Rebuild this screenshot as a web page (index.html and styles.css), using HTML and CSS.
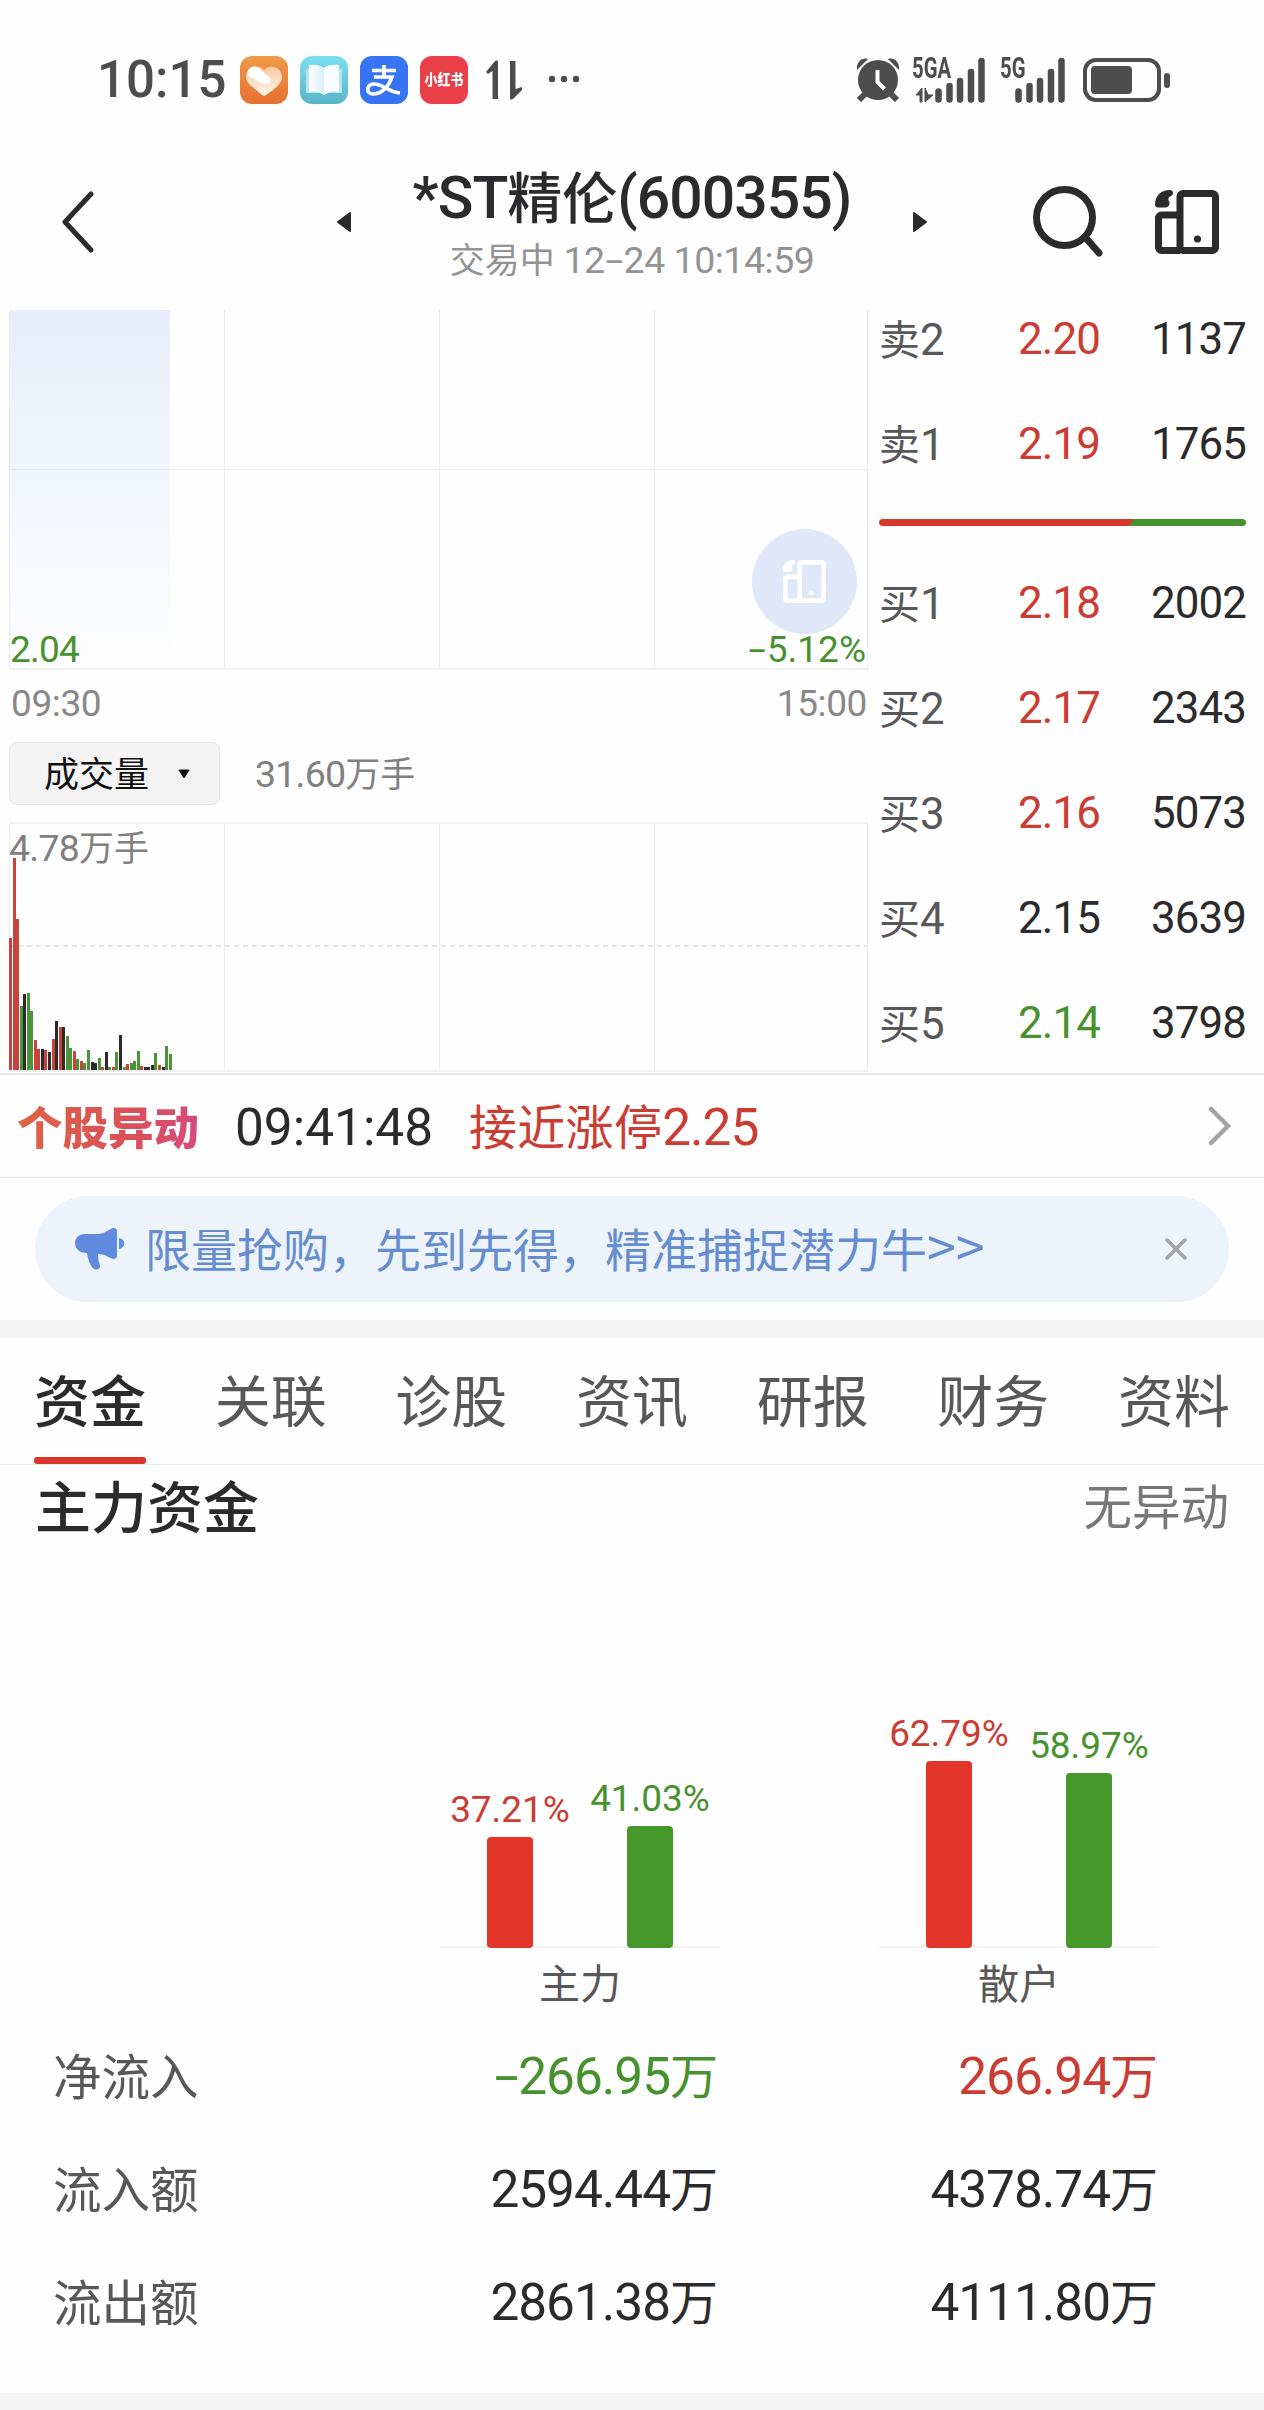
FILE: index.html
```
<!DOCTYPE html>
<html lang="zh-CN">
<head>
    <meta charset="UTF-8">
    <meta name="viewport" content="width=device-width, initial-scale=1.0">
    <title>*ST精伦(600355)</title>
    <link rel="stylesheet" href="styles.css">
</head>
<body>
    <svg class="defs" width="0" height="0">
        <symbol id="cards" viewBox="0 0 64 64">
            <rect x="25" y="3.500" width="35.500" height="57" rx="3" fill="none" stroke="currentColor" stroke-width="7"/>
            <path d="M25 25H6.500a3 3 0 0 0-3 3v29.500a3 3 0 0 0 3 3H25" fill="none" stroke="currentColor" stroke-width="7"/>
            <circle cx="42.500" cy="49" r="3.600" fill="currentColor"/>
            <path d="M15 0c2 0 3 1.500 3 3s-1 2.500-3 3.500c-1.500 1-2 2.500-1.500 4 2 1.500 1.500 7-3.500 7H3c-2 0-3-1-3-3C0 6 6 0 15 0z" fill="currentColor"/>
        </symbol>
    </svg>

    <div class="status-bar">
        <span class="clock">10:15</span>
        <div class="apps">
            <svg class="app" viewBox="0 0 48 48">
                <defs>
                    <linearGradient id="orange" x2="0" y2="1"><stop stop-color="#f09b48"/><stop offset="1" stop-color="#e66f32"/></linearGradient>
                    <linearGradient id="heart" x2="0" y2="1"><stop stop-color="#f8c9a2"/><stop offset="1" stop-color="#fff3e8"/></linearGradient>
                </defs>
                <rect width="48" height="48" rx="12" fill="url(#orange)"/>
                <path d="M24 14c5-6 18-4 18 7 0 6-5 9-9 13l-7 5q-2 1.500-4 0l-7-6C10 29 6 26 6 21 6 10 19 8 24 14z" fill="url(#heart)"/>
                <path d="M10 12c5-3 9-1 12 3l7 6c4 4 0 9-5 7-5-1-8-5-12-6-5-1-6-7-2-10z" fill="#fff"/>
            </svg>
            <svg class="app" viewBox="0 0 48 48">
                <defs>
                    <linearGradient id="teal" x2="0" y2="1"><stop stop-color="#7be0f3"/><stop offset="1" stop-color="#59b3c6"/></linearGradient>
                    <linearGradient id="page"><stop stop-color="#fff"/><stop offset="1" stop-color="#d9edf5"/></linearGradient>
                </defs>
                <rect width="48" height="48" rx="12" fill="url(#teal)"/>
                <path d="M6 13h36v24H28l-4 2-4-2H6z" fill="#b6e5f0"/>
                <path d="M9 9c7-1 12 0 15 3v27c-3-3-8-4-15-3z" fill="url(#page)"/>
                <path d="M39 9c-7-1-12 0-15 3v27c3-3 8-4 15-3z" fill="#f6fcff"/>
            </svg>
            <svg class="app" viewBox="0 0 48 48">
                <rect width="48" height="48" rx="12" fill="#3774f3"/>
                <path d="M12 14.500h24M24 9v12M14 21h18c-3 9-10 17-19 17-7 0-7-9 0-10 9-1 15 8 27 9" fill="none" stroke="#fff" stroke-width="3.600"/>
            </svg>
            <span class="app app-red"><b>小红书</b></span>
        </div>
        <svg class="updown" viewBox="0 0 36 40">
            <path d="M0 12L9 1q3-2 3 1v37H6.500V11L2 14zM24 1h5.500v28l6.500-2v3L27 39q-3 2-3-1z" fill="#4d4d4d"/>
        </svg>
        <svg class="more" viewBox="0 0 32 8">
            <circle cx="4" cy="4" r="3.200"/><circle cx="16" cy="4" r="3.200"/><circle cx="28" cy="4" r="3.200"/>
        </svg>
        <svg class="alarm" viewBox="0 0 44 44">
            <circle cx="22" cy="22" r="20" fill="#4d4d4d"/>
            <path d="M9 36l-6 6M35 36l6 6" stroke="#4d4d4d" stroke-width="6"/>
            <path d="M1 12C0 4 6-1 12 1z M43 12C44 4 38-1 32 1z" fill="#4d4d4d"/>
            <path d="M21.500 12v12l7 7" fill="none" stroke="#fff" stroke-width="4"/>
        </svg>
        <div class="signal signal-a">
            <span class="net">5GA</span>
            <svg viewBox="0 0 74 46">
                <path d="M4 38l6-7v14H8v-7zM13 31v14l8-7h-5z" fill="#4d4d4d" stroke="#4d4d4d"/>
                <path d="M26.500 34.500v8M37.500 29v13.500M48 24v18.500M59 15v27.500M69.500 4v38.500" stroke="#4d4d4d" stroke-width="6.500" stroke-linecap="round"/>
            </svg>
        </div>
        <div class="signal signal-b">
            <span class="net">5G</span>
            <svg viewBox="0 0 66 46">
                <path d="M18.500 34.500v8M29.500 29v13.500M40 24v18.500M51 15v27.500M61.500 4v38.500" stroke="#4d4d4d" stroke-width="6.500" stroke-linecap="round"/>
            </svg>
        </div>
        <svg class="battery" viewBox="0 0 88 44">
            <rect x="2" y="2" width="74" height="40" rx="11" fill="none" stroke="#4d4d4d" stroke-width="4"/>
            <rect x="8" y="8" width="41" height="28" rx="4" fill="#4d4d4d"/>
            <rect x="81" y="15" width="6" height="15" rx="3" fill="#4d4d4d"/>
        </svg>
    </div>

    <div class="nav">
        <svg class="back" viewBox="0 0 34 62"><path d="M30 3L4 31l26 28" fill="none" stroke="#2b2b2d" stroke-width="5" stroke-linecap="round" stroke-linejoin="round"/></svg>
        <svg class="tri prev" viewBox="0 0 14 20"><path d="M13 1v18L1 10z" fill="#2b2b2d" stroke="#2b2b2d" stroke-linejoin="round" stroke-width="2"/></svg>
        <div class="title">
            <h1><span class="num">*ST</span>精伦<span class="num">(600355)</span></h1>
            <p>交易中<span class="num"> 12<span class="minus">-</span>24 10:14:59</span></p>
        </div>
        <svg class="tri next" viewBox="0 0 14 20"><path d="M1 1v18l12-9z" fill="#2b2b2d" stroke="#2b2b2d" stroke-linejoin="round" stroke-width="2"/></svg>
        <svg class="search" viewBox="0 0 70 72"><circle cx="31.500" cy="31.500" r="28" fill="none" stroke="#2b2b2d" stroke-width="7"/><path d="M52 51l14 16" stroke="#2b2b2d" stroke-width="7" stroke-linecap="round"/></svg>
        <svg class="cards"><use href="#cards"/></svg>
    </div>

    <div class="market">
        <div class="charts">
            <div class="trend">
                <div class="quarter area"></div>
                <div class="quarter"></div>
                <div class="quarter"></div>
                <div class="quarter"></div>
                <div class="float-button"><svg><use href="#cards"/></svg></div>
                <span class="low num">2.04</span>
                <span class="pct num"><span class="minus">-</span>5.12%</span>
            </div>
            <div class="times num"><span>09:30</span><span>15:00</span></div>
            <div class="indicator">
                <div class="select">成交量<svg viewBox="0 0 12 10"><path d="M1 1h10L6 9z" stroke="#111" stroke-linejoin="round" fill="#111"/></svg></div>
                <span><span class="num">31.60</span>万手</span>
            </div>
            <div class="volume">
                <div class="quarter"></div>
                <div class="quarter"></div>
                <div class="quarter"></div>
                <div class="quarter"></div>
                <div class="max"><span class="num">4.78</span>万手</div>
                <div class="half"></div>
                <div class="vol-bars"></div>
            </div>
        </div>
        <div class="book">
            <div class="row"><span>卖<b class="num">2</b></span><b class="num red">2.20</b><b class="num">1137</b></div>
            <div class="row"><span>卖<b class="num">1</b></span><b class="num red">2.19</b><b class="num">1765</b></div>
            <div class="ratio"></div>
            <div class="row"><span>买<b class="num">1</b></span><b class="num red">2.18</b><b class="num">2002</b></div>
            <div class="row"><span>买<b class="num">2</b></span><b class="num red">2.17</b><b class="num">2343</b></div>
            <div class="row"><span>买<b class="num">3</b></span><b class="num red">2.16</b><b class="num">5073</b></div>
            <div class="row"><span>买<b class="num">4</b></span><b class="num">2.15</b><b class="num">3639</b></div>
            <div class="row"><span>买<b class="num">5</b></span><b class="num green">2.14</b><b class="num">3798</b></div>
        </div>
    </div>

    <div class="alert">
        <strong>个股异动</strong>
        <span class="alert-time num">09:41:48</span>
        <span class="red">接近涨停<span class="num">2.25</span></span>
        <svg viewBox="0 0 24 40"><path d="M3 3l17 17L3 37" fill="none" stroke="#a3a3a3" stroke-width="4.500" stroke-linecap="round"/></svg>
    </div>

    <div class="promo-wrap">
        <div class="promo">
            <svg class="horn" viewBox="0 0 50 42">
                <path d="M10 6h13c6 0 10-4 15-6q4 0 4 3v25q0 3-4 3c-5-2-9-5-15-5 0 5 1 9 2 12 0 4-5 5-8 1-3-4-4-8-5-14C4 25 0 20 0 15S4 6 10 6z" fill="#5f8add"/>
                <path d="M44 10c7 1 7 10 0 11z" fill="#5f8add"/>
            </svg>
            <span>限量抢购，先到先得，精准捕捉潜力牛<i>&gt;&gt;</i></span>
            <svg class="close" viewBox="0 0 22 22"><path d="M2 2l18 18M20 2L2 20" stroke="#a3a3a3" stroke-width="3.500" stroke-linecap="round"/></svg>
        </div>
    </div>

    <div class="tabs">
        <span class="active">资金</span>
        <span>关联</span>
        <span>诊股</span>
        <span>资讯</span>
        <span>研报</span>
        <span>财务</span>
        <span>资料</span>
    </div>

    <div class="funds">
        <div class="funds-head"><h2>主力资金</h2><span>无异动</span></div>
        <div class="groups">
            <div class="group">
                <div class="bars">
                    <div class="bar red"><span class="num">37.21%</span><i style="height: 111px"></i></div>
                    <div class="bar green"><span class="num">41.03%</span><i style="height: 122px"></i></div>
                </div>
                <p>主力</p>
            </div>
            <div class="group">
                <div class="bars">
                    <div class="bar red"><span class="num">62.79%</span><i style="height: 187px"></i></div>
                    <div class="bar green"><span class="num">58.97%</span><i style="height: 175px"></i></div>
                </div>
                <p>散户</p>
            </div>
        </div>
        <div class="flow"><span>净流入</span><div class="green"><span class="num"><span class="minus">-</span>266.95</span>万</div><div class="red"><span class="num">266.94</span>万</div></div>
        <div class="flow"><span>流入额</span><div><span class="num">2594.44</span>万</div><div><span class="num">4378.74</span>万</div></div>
        <div class="flow"><span>流出额</span><div><span class="num">2861.38</span>万</div><div><span class="num">4111.80</span>万</div></div>
    </div>

    <script>
        // one bar per minute: height in px and colour (r up, g down, k flat)
        const heights = [132, 212, 151, 64, 76, 77, 59, 30, 21, 21, 20, 18, 31, 49, 43, 43, 34, 22, 19, 11, 9, 7, 20, 8, 7, 12, 3, 18, 3, 3, 18, 35, 3, 6, 7, 9, 19, 4, 3, 3, 5, 17, 5, 3, 24, 16];
        const colors = "rrrgkggrrkrkrkrkggrgrggkkgrkgrgkgrgggrkkkgrkgg";
        const bars = document.getElementsByClassName("vol-bars")[0];

        heights.forEach((height, i) => {
            const bar = document.createElement("i");
            bar.setAttribute("class", colors[i]);
            bar.style.height = `${height}px`;
            bars.append(bar);
        });
    </script>
</body>
</html>
```
FILE: styles.css
```
*{
   margin: 0;
   padding: 0;
   box-sizing: border-box;
}

body{
   width: 1264px;
   height: 2410px;
   overflow: hidden;
   background-color: #fefefe;
   color: #2b2b2d;
   font-family: "Noto Sans CJK SC", sans-serif;
}

svg{
   display: block;
   flex-shrink: 0;
}

i, b{
   font-style: normal;
   font-weight: 400;
}

.defs{
   position: absolute;
}

/* digits are drawn a little larger than the chinese text beside them */
.num{
   font-family: Roboto, "Noto Sans CJK SC", sans-serif;
   font-size: 1.07em;
   letter-spacing: -0.02em;
}

.minus{
   display: inline-block;
   margin: 0 0.12em;
   transform: scaleX(1.7);
}

.red{
   color: #cb3c33;
}

.green{
   color: #47922f;
}

/* status bar */
.status-bar{
   height: 160px;
   padding: 0 93px 0 97px;
   display: flex;
   align-items: center;
}

.clock{
   width: 143px;
   font: 500 51px/60px Roboto, sans-serif;
   color: #4d4d4d;
}

.apps{
   display: flex;
   gap: 12px;
}

.app{
   width: 48px;
   height: 48px;
}

.app-red{
   border-radius: 12px;
   background-color: #e93f49;
   color: #fff;
   font-size: 13px;
   line-height: 46px;
   text-align: center;
}

.app-red b{
   display: block;
   font-weight: 900;
   transform: scaleY(1.15);
}

.updown{
   width: 36px;
   height: 40px;
   margin-left: 18px;
}

.more{
   width: 32px;
   height: 8px;
   margin: 0 auto 2px 26px;
   fill: #4d4d4d;
}

.alarm{
   width: 44px;
   height: 44px;
}

.signal{
   position: relative;
   height: 46px;
}

.signal svg{
   height: 46px;
}

.signal-a{
   width: 74px;
   margin-left: 12px;
}

.signal-b{
   width: 66px;
   margin: 0 17px 0 14px;
}

.net{
   position: absolute;
   left: 0;
   top: 0;
   font: 700 29px/22px Roboto, sans-serif;
   color: #4d4d4d;
   transform: scaleX(0.7);
   transform-origin: left;
}

.battery{
   width: 88px;
   height: 44px;
}

/* title */
.nav{
   height: 150px;
   padding: 0 45px 26px 61px;
   display: flex;
   align-items: center;
}

.back{
   width: 34px;
   height: 62px;
}

.tri{
   width: 14px;
   height: 20px;
}

.prev{
   margin-left: 242px;
}

.title{
   width: 562px;
   text-align: center;
   white-space: nowrap;
}

.title h1{
   font-size: 55px;
   font-weight: 500;
   line-height: 70px;
}

.title h1 .num{
   letter-spacing: -0.016em;
}

.title p{
   font-size: 35px;
   line-height: 50px;
   color: #929394;
}

.title p .num{
   letter-spacing: -0.012em;
}

.search{
   width: 70px;
   height: 72px;
   margin-left: 106px;
}

.cards{
   width: 64px;
   height: 64px;
   margin-left: auto;
}

/* charts and order book */
.market{
   height: 765px;
   display: flex;
   border-bottom: 2px solid #e6e6e6;
}

.charts{
   width: 868px;
   padding-left: 9px;
}

.trend, .volume{
   position: relative;
   display: grid;
   grid-template-columns: 215px 215px 215px 1fr;
   border-right: 1px solid #ececec;
   border-bottom: 2px solid #f0f0f0;
}

.quarter{
   border-left: 1px solid #ececec;
}

.trend{
   height: 360px;
   background: linear-gradient(#ececec, #ececec) 0 159px / 100% 1px no-repeat;
}

.area{
   background:
      linear-gradient(#e2e6ee, #e2e6ee) 0 159px / 160px 1px no-repeat,
      linear-gradient(#e7eefa, #f2f6fd 50%, #fefefe) 0 0 / 160px 100% no-repeat;
}

.low, .pct{
   position: absolute;
   bottom: -2px;
   font-size: 37px;
   line-height: 40px;
   color: #47922f;
}

.low{
   left: 1px;
}

.pct{
   right: 1px;
   letter-spacing: 0;
}

.float-button{
   position: absolute;
   right: 10px;
   top: 219px;
   width: 105px;
   height: 105px;
   border-radius: 50%;
   background-color: #dfe8f8;
   color: #fff;
   display: flex;
   align-items: center;
   justify-content: center;
}

.float-button svg{
   width: 43px;
   height: 43px;
}

.times{
   height: 72px;
   padding: 0 1px 5px 2px;
   display: flex;
   align-items: center;
   justify-content: space-between;
   font-size: 37px;
   letter-spacing: -0.01em;
   color: #888;
}

.indicator{
   height: 63px;
   display: flex;
   align-items: center;
   gap: 35px;
   font-size: 35px;
   line-height: 50px;
   color: #808080;
}

.indicator > span{
   padding-bottom: 2px;
}

.select{
   width: 211px;
   height: 63px;
   padding: 0 29px 3px 34px;
   border: 1px solid #e6e6e6;
   border-radius: 8px;
   background-color: #f4f4f4;
   color: #111;
   display: flex;
   align-items: center;
   justify-content: space-between;
}

.select svg{
   width: 12px;
   height: 10px;
   margin-top: 3px;
}

.volume{
   height: 250px;
   margin-top: 17px;
   border-top: 2px solid #f0f0f0;
}

.max{
   position: absolute;
   left: 0;
   top: -3px;
   font-size: 35px;
   line-height: 50px;
   color: #808080;
}

.half{
   position: absolute;
   left: 0;
   right: 0;
   top: 121px;
   height: 2px;
   background: repeating-linear-gradient(90deg, #e2e2e2 0 5px, transparent 5px 9px);
}

.vol-bars{
   position: absolute;
   left: 0;
   bottom: 0;
   display: flex;
   align-items: flex-end;
   gap: 0.560px;
}

.vol-bars i{
   width: 3px;
}

.r{
   background-color: #c9433c;
}

.g{
   background-color: #4b9537;
}

.k{
   background-color: #2b2b2b;
}

.book{
   flex: 1;
   padding: 0 18px 0 11px;
}

.row{
   height: 105px;
   display: grid;
   grid-template-columns: 139px 1fr auto;
   align-items: center;
   font-size: 41px;
   line-height: 60px;
}

.row:first-child{
   height: 81px;
   padding-bottom: 27px;
   line-height: 54px;
}

.row span{
   color: #58585a;
}

.ratio{
   height: 7px;
   margin: 23px 0 24px;
   border-radius: 4px;
   background: linear-gradient(125deg, #d9372d 68.500%, #47942d 68.500%);
}

/* alert line */
.alert{
   height: 103px;
   padding: 0 32px 0 17px;
   display: flex;
   align-items: center;
   border-bottom: 1px solid #e6e6e6;
   font-size: 48px;
   line-height: 60px;
}

.alert strong{
   width: 218px;
   padding-bottom: 3px;
   font-size: 45.500px;
   font-weight: 900;
   background: linear-gradient(100deg, #dc6543, #dc5058 50%, #d44b7e 84%);
   -webkit-background-clip: text;
   background-clip: text;
   color: transparent;
}

.alert-time{
   width: 234px;
   padding-top: 3px;
   letter-spacing: 0;
}

.alert .red{
   letter-spacing: 0.300px;
}

.alert svg{
   width: 24px;
   height: 40px;
   margin-left: auto;
}

/* promo */
.promo-wrap{
   height: 160px;
   padding: 18px 35px;
   border-bottom: 18px solid #f4f4f4;
}

.promo{
   height: 106px;
   padding: 0 42px 0 40px;
   border-radius: 53px;
   background-color: #edf3fb;
   color: #668dcf;
   display: flex;
   align-items: center;
   font-size: 46px;
   line-height: 60px;
}

.promo span{
   padding-bottom: 5px;
}

.horn{
   width: 50px;
   height: 42px;
   margin-right: 20px;
}

.promo i{
   font-size: 52px;
   line-height: 1;
}

.close{
   width: 22px;
   height: 22px;
   margin-left: auto;
}

/* tabs */
.tabs{
   height: 127px;
   padding: 0 34px;
   display: flex;
   justify-content: space-between;
   border-bottom: 1px solid #e6e6e6;
   font-size: 56px;
   line-height: 119px;
   color: #58585a;
}

.tabs span{
   position: relative;
}

.tabs .active{
   color: #2b2b2d;
   font-weight: 500;
}

.active::after{
   content: "";
   position: absolute;
   left: 0;
   right: 0;
   bottom: 0;
   height: 7px;
   border-radius: 3px;
   background-color: #d9372d;
}

/* main funds */
.funds{
   height: 928px;
}

.funds-head{
   height: 86px;
   padding: 0 35px 8px;
   display: flex;
   align-items: center;
   justify-content: space-between;
   font-size: 48.500px;
   line-height: 70px;
   color: #777;
}

.funds-head h2{
   font-size: 56px;
   font-weight: 500;
   color: #2b2b2d;
}

.groups{
   height: 470px;
   padding: 0 105px 0 440px;
   display: flex;
   justify-content: space-between;
   align-items: flex-end;
}

.group{
   width: 280px;
}

.bars{
   display: flex;
   align-items: flex-end;
   border-bottom: 2px solid #f0f0f0;
}

.bar{
   width: 140px;
   margin-bottom: -2px;
   display: flex;
   flex-direction: column;
   align-items: center;
   font-size: 34.500px;
   line-height: 40px;
}

.bar .num{
   letter-spacing: 0;
}

.bar i{
   width: 46px;
   margin-top: 7px;
   border-radius: 4px;
   background-color: #46982b;
}

.bar.red i{
   background-color: #e33429;
}

.group p{
   height: 73px;
   font-size: 41px;
   line-height: 66px;
   text-align: center;
   color: #58585a;
}

.flow{
   height: 113px;
   padding: 0 0 6px 53px;
   display: grid;
   grid-template-columns: 201px 464px 440px;
   align-items: center;
   font-size: 48px;
   line-height: 70px;
}

.flow > span{
   padding-bottom: 2px;
   font-size: 48.500px;
   color: #58585a;
}

.flow div{
   text-align: right;
}

.funds::after{
   content: "";
   display: block;
   height: 18px;
   margin-top: 33px;
   background-color: #f4f4f4;
}
```
